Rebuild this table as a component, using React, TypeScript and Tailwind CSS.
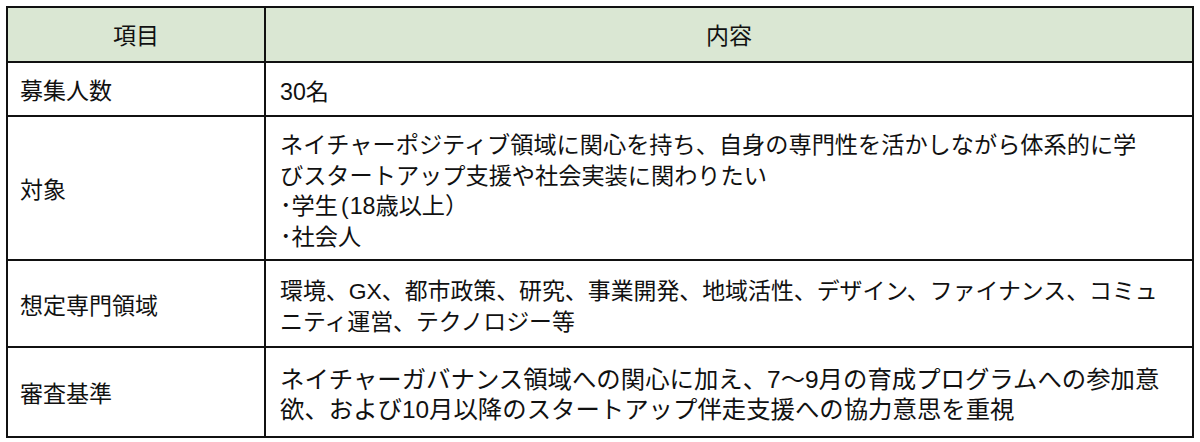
import React from "react";

const font = {
  fontFamily: '"Liberation Sans", "Noto Sans CJK JP", sans-serif',
};

function Row({
  label,
  children,
  h,
  size = "text-[23.2px]",
  first,
}: {
  label: React.ReactNode;
  children: React.ReactNode;
  h: string;
  size?: string;
  first?: boolean;
}) {
  return (
    <div className={`grid grid-cols-[258px_1fr] ${first ? "" : "border-t-2 border-[#111]"}`}>
      <div className={`${h} flex items-center pl-[12px] pt-[5px] border-r-2 border-[#111]`}>{label}</div>
      <div className={`${h} flex items-center pl-[14px] pt-[6px]`}>
        <div className={`whitespace-nowrap ${size}`}>{children}</div>
      </div>
    </div>
  );
}

export default function App() {
  return (
    <div className="w-[1200px] h-[442px] bg-white pt-[6px] pl-[6px]" style={font}>
      <div className="w-[1188px] border-2 border-[#111] text-[23px] leading-[30.5px] text-[#111]">
        <div className="grid grid-cols-[258px_1fr] bg-[#dae7d3]">
          <div className="h-[53px] flex items-center justify-center pt-[3px] border-r-2 border-[#111]">項目</div>
          <div className="h-[53px] flex items-center justify-center pt-[3px]">内容</div>
        </div>
        <Row label="募集人数" h="h-[52px]">
          30名
        </Row>
        <Row label="対象" h="h-[142px]">
          ネイチャーポジティブ領域に関心を持ち、自身の専門性を活かしながら体系的に学
          <br />
          びスタートアップ支援や社会実装に関わりたい
          <br />
          ･学生<span className="ml-[3px] mr-[1px]">(</span>18歳以上）
          <br />
          ･社会人
        </Row>
        <Row label="想定専門領域" h="h-[85px]" size="text-[22.9px]">
          環境、GX、都市政策、研究、事業開発、地域活性、デザイン、ファイナンス、コミュ
          <br />
          ニティ運営、テクノロジー等
        </Row>
        <Row label="審査基準" h="h-[88px]" size="text-[24.4px]">
          ネイチャーガバナンス領域への関心に加え、7～9月の育成プログラムへの参加意
          <br />
          欲、および10月以降のスタートアップ伴走支援への協力意思を重視
        </Row>
      </div>
    </div>
  );
}
